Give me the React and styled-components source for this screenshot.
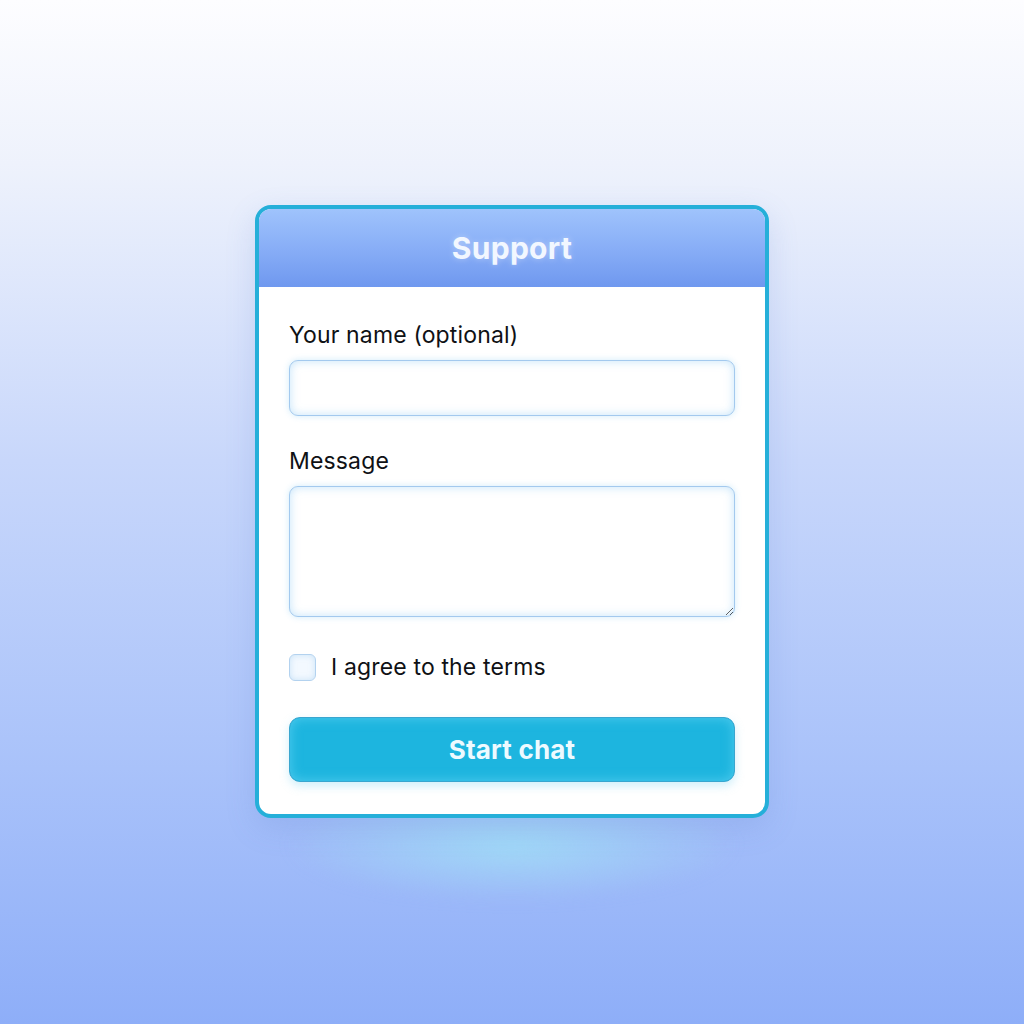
import React from 'react';
import styled, { createGlobalStyle } from 'styled-components';

const GlobalStyle = createGlobalStyle`
  html, body {
    margin: 0;
    padding: 0;
  }
  body {
    font-family: Inter, "Noto Sans", "Liberation Sans", sans-serif;
  }
`;

const Page = styled.div`
  position: relative;
  width: 1024px;
  height: 1024px;
  display: flex;
  justify-content: center;
  align-items: flex-start;
  padding-top: 205px;
  box-sizing: border-box;
  background: linear-gradient(180deg, #fdfdff 0%, #eef2fc 16%, #c8d7fb 45%, #a9c2fa 75%, #8eaef8 100%);
  overflow: hidden;
`;

const Glow = styled.div`
  position: absolute;
  left: 290px;
  top: 790px;
  width: 444px;
  height: 110px;
  border-radius: 50%;
  background: radial-gradient(ellipse at center, rgba(160, 222, 246, 0.85) 0%, rgba(160, 214, 246, 0.4) 45%, rgba(160, 200, 246, 0) 72%);
  filter: blur(8px);
`;

const Card = styled.div`
  position: relative;
  width: 514px;
  box-sizing: border-box;
  border: 4px solid #25afd9;
  border-radius: 16px;
  background: #fff;
  overflow: hidden;
  box-shadow: 0 10px 30px rgba(90, 120, 200, 0.18);
`;

const Header = styled.div`
  height: 78px;
  display: flex;
  align-items: center;
  justify-content: center;
  background: linear-gradient(180deg, #9fc3fc 0%, #86acf6 55%, #6f98ef 100%);
  color: #f2f7ff;
  font-size: 30px;
  font-weight: 700;
  letter-spacing: 0.3px;
  text-shadow: 0 0 6px rgba(255, 255, 255, 0.35);
`;

const Body = styled.div`
  display: flex;
  flex-direction: column;
  padding: 34px 30px 32px;
`;

const Label = styled.label`
  font-size: 23px;
  line-height: 28px;
  letter-spacing: 0.15px;
  color: #0f1115;
  margin-top: ${(p) => (p.first ? '0' : '31px')};
  margin-bottom: 11px;
`;

const fieldStyle = `
  width: 100%;
  box-sizing: border-box;
  border: 1.5px solid #a3c9ee;
  border-radius: 9px;
  background: #fff;
  box-shadow: inset 0 0 10px rgba(150, 205, 245, 0.55), 0 0 6px rgba(150, 210, 245, 0.45);
  outline: none;
  font-family: inherit;
  font-size: 18px;
  padding: 10px 14px;
`;

const Input = styled.input`
  ${fieldStyle}
  height: 56px;
`;

const TextArea = styled.textarea`
  ${fieldStyle}
  height: 131px;
  resize: vertical;
  display: block;
`;

const CheckRow = styled.label`
  display: flex;
  align-items: center;
  gap: 15px;
  margin-top: 36px;
  font-size: 23px;
  line-height: 28px;
  letter-spacing: 0.15px;
  color: #0f1115;
`;

const CheckBox = styled.span`
  width: 27px;
  height: 27px;
  box-sizing: border-box;
  border: 1.5px solid #b3d2ef;
  border-radius: 6px;
  background: #f3f9ff;
  box-shadow: inset 0 0 6px rgba(160, 205, 240, 0.5);
`;

const Button = styled.button`
  margin-top: 36px;
  height: 65px;
  width: 100%;
  border: 1.5px solid #3aa6cf;
  border-radius: 11px;
  background: #1db5df;
  box-shadow: inset 0 0 12px rgba(120, 220, 250, 0.55), 0 4px 10px rgba(120, 210, 240, 0.35);
  color: #eefaff;
  font-family: inherit;
  font-size: 26px;
  font-weight: 700;
  letter-spacing: 0.2px;
  cursor: pointer;
`;

export default function App() {
  return (
    <>
      <GlobalStyle />
      <Page>
        <Glow />
        <Card>
          <Header>Support</Header>
          <Body>
            <Label first>Your name (optional)</Label>
            <Input type="text" />
            <Label>Message</Label>
            <TextArea />
            <CheckRow>
              <CheckBox />
              I agree to the terms
            </CheckRow>
            <Button type="button">Start chat</Button>
          </Body>
        </Card>
      </Page>
    </>
  );
}
